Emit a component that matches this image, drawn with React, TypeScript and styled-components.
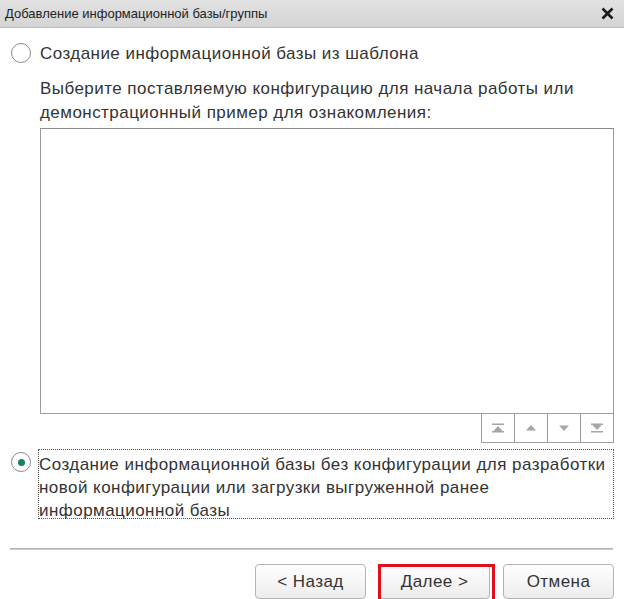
import React from "react";
import styled, { createGlobalStyle } from "styled-components";

const Global = createGlobalStyle`
  html, body { margin: 0; padding: 0; background: #ffffff; }
  body { font-family: "Liberation Sans", Arial, sans-serif; color: #333; }
  #root { width: 624px; height: 599px; overflow: hidden; }
`;

const Window = styled.div`
  width: 624px;
  height: 599px;
  display: flex;
  flex-direction: column;
  background: #fff;
`;

const TitleBar = styled.div`
  height: 27px;
  flex: none;
  display: flex;
  align-items: center;
  justify-content: space-between;
  padding: 0 10px 0 5px;
  background: linear-gradient(#e2e2e2, #d4d4d4);
  border-bottom: 1px solid #bdbdbd;
  font-size: 13px;
  color: #222;
`;

const Close = styled.span`
  display: flex;
  align-items: center;
`;

const Body = styled.div`
  flex: 1;
  display: flex;
  flex-direction: column;
  padding: 0 10px 0 11px;
`;

const OptionRow = styled.div<{ $top: number }>`
  display: flex;
  align-items: flex-start;
  gap: 9px;
  margin-top: ${(p) => p.$top}px;
`;

const Radio = styled.span<{ $checked?: boolean; $offset?: number }>`
  width: 20px;
  height: 20px;
  flex: none;
  box-sizing: border-box;
  border-radius: 50%;
  border: 1px solid #8a8a8a;
  background: #fff;
  display: flex;
  align-items: center;
  justify-content: center;
  margin-top: ${(p) => p.$offset ?? 0}px;
  &::after {
    content: "";
    display: ${(p) => (p.$checked ? "block" : "none")};
    width: 7px;
    height: 7px;
    border-radius: 50%;
    background: #14875a;
  }
`;

const Label = styled.span`
  font-size: 17px;
  letter-spacing: 0.45px;
  line-height: 22px;
  color: #333;
`;

const FocusLabel = styled.div`
  flex: 1;
  font-size: 17px;
  letter-spacing: 0.45px;
  line-height: 23px;
  color: #333;
  border: 1px dotted #555;
  padding: 3px 1px 1px 0;
  margin-left: -2px;
  height: 70px;
  box-sizing: border-box;
`;

const Indented = styled.div`
  margin-left: 29px;
  display: flex;
  flex-direction: column;
`;

const Description = styled.div`
  margin-top: 12px;
  font-size: 17px;
  letter-spacing: 0.45px;
  line-height: 24px;
  color: #333;
`;

const ListBox = styled.div`
  margin-top: 3px;
  height: 286px;
  box-sizing: border-box;
  border: 1px solid #9c9c9c;
  border-top-color: #8c8c8c;
  background: #fff;
`;

const NavBar = styled.div`
  display: flex;
  justify-content: flex-end;
`;

const NavButton = styled.button`
  width: 34px;
  height: 30px;
  box-sizing: border-box;
  padding: 0;
  margin: 0;
  margin-left: -1px;
  margin-top: -1px;
  border: 1px solid #9c9c9c;
  background: #fff;
  display: flex;
  align-items: center;
  justify-content: center;
`;

const Separator = styled.div`
  margin-top: 29px;
  height: 2px;
  background: linear-gradient(#a8a8a8, #d8d8d8);
  margin-left: -1px;
  margin-right: 1px;
`;

const ButtonBar = styled.div`
  margin-top: 14px;
  display: flex;
  justify-content: flex-end;
  gap: 13px;
`;

const Button = styled.button<{ $highlight?: boolean }>`
  position: relative;
  width: 111px;
  height: 35px;
  box-sizing: border-box;
  border: 1px solid #b4b4b4;
  border-radius: 4px;
  background: linear-gradient(#ffffff, #ececec);
  font-family: "Liberation Sans", Arial, sans-serif;
  font-size: 17px;
  letter-spacing: 0.45px;
  color: #333;
  padding: 0;
  &::after {
    content: "";
    display: ${(p) => (p.$highlight ? "block" : "none")};
    position: absolute;
    left: -2px;
    top: -1px;
    right: -6px;
    bottom: -4px;
    border: 3px solid #e0101a;
    pointer-events: none;
  }
`;

const Tri = ({ dir, bar }: { dir: "up" | "down"; bar?: boolean }) => (
  <svg width="14" height="10" viewBox="0 0 14 10">
    {dir === "up" ? (
      <>
        {bar && <rect x="1" y="0.5" width="12" height="1.5" fill="#a6a6a6" />}
        <polygon points={bar ? "7,3 12,8.5 2,8.5" : "7,2 12,7.5 2,7.5"} fill="#a6a6a6" />
        {bar && <rect x="1" y="8" width="12" height="1.5" fill="#a6a6a6" />}
      </>
    ) : (
      <>
        {bar && <rect x="1" y="0.5" width="12" height="1.5" fill="#a6a6a6" />}
        <polygon points={bar ? "2,1.5 12,1.5 7,7" : "2,2.5 12,2.5 7,8"} fill="#a6a6a6" />
        {bar && <rect x="1" y="8" width="12" height="1.5" fill="#a6a6a6" />}
      </>
    )}
  </svg>
);

export default function App() {
  return (
    <Window>
      <Global />
      <TitleBar>
        <span>Добавление информационной базы/группы</span>
        <Close>
          <svg width="13" height="13" viewBox="0 0 13 13">
            <path d="M1.5 1.5 L11.5 11.5 M11.5 1.5 L1.5 11.5" stroke="#1a1a1a" strokeWidth="2.6" />
          </svg>
        </Close>
      </TitleBar>
      <Body>
        <OptionRow $top={15}>
          <Radio />
          <Label>Создание информационной базы из шаблона</Label>
        </OptionRow>
        <Indented>
          <Description>
            Выберите поставляемую конфигурацию для начала работы или
            <br />
            демонстрационный пример для ознакомления:
          </Description>
          <ListBox />
          <NavBar>
            <NavButton aria-label="first">
              <Tri dir="up" bar />
            </NavButton>
            <NavButton aria-label="up">
              <Tri dir="up" />
            </NavButton>
            <NavButton aria-label="down">
              <Tri dir="down" />
            </NavButton>
            <NavButton aria-label="last">
              <Tri dir="down" bar />
            </NavButton>
          </NavBar>
        </Indented>
        <OptionRow $top={6}>
          <Radio $checked $offset={3} />
          <FocusLabel>
            Создание информационной базы без конфигурации для разработки
            <br />
            новой конфигурации или загрузки выгруженной ранее
            <br />
            информационной базы
          </FocusLabel>
        </OptionRow>
        <Separator />
        <ButtonBar>
          <Button>&lt; Назад</Button>
          <Button $highlight>Далее &gt;</Button>
          <Button>Отмена</Button>
        </ButtonBar>
      </Body>
    </Window>
  );
}
